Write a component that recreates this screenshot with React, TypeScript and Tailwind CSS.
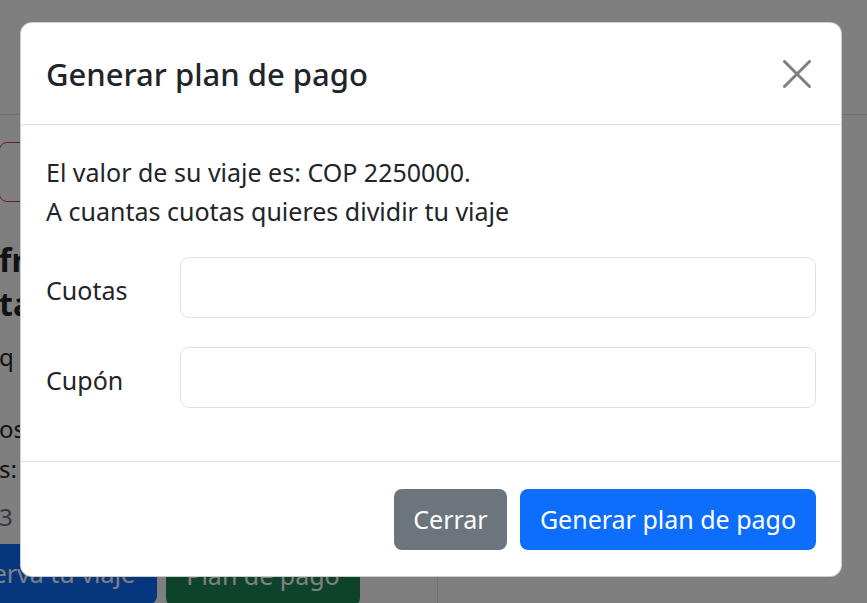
import React from "react";

export default function App() {
  return (
    <div className="relative h-[603px] w-[867px] overflow-hidden bg-white font-['Noto_Sans',sans-serif] text-[#212529]">
      {/* background page */}
      <div className="h-[115px] border-b border-[#dee2e6]" />
      <div className="flex">
        <div className="ml-[-1px] flex w-[438px] flex-col">
          <div className="mt-[27px] h-[60px] w-[300px] rounded-[8px] border border-[#dc3545]" />
          <div className="w-[21px] overflow-hidden whitespace-nowrap">
            <h2 className="mt-[36px] text-[32px] font-bold leading-[44px]">
              fr
              <br />
              ta
            </h2>
            <p className="mt-[12px] text-[24px] leading-[38px]">q</p>
            <p className="mt-[34px] text-[24px] leading-[38px]">os</p>
            <p className="mt-[2px] text-[24px] leading-[38px]">s:</p>
            <p className="mt-[10px] text-[24px] leading-[38px] text-[#6c757d]">3</p>
          </div>
          <div className="mt-[8px] flex gap-[9px]">
            <div className="ml-[-70px] flex h-[60px] w-[228px] items-center justify-center rounded-[8px] bg-[#0d6efd] text-[25px] text-white">
              Reserva tu viaje
            </div>
            <div className="mt-[2px] flex h-[60px] w-[194px] items-center justify-center rounded-[8px] bg-[#198754] text-[25px] text-white">
              Plan de pago
            </div>
          </div>
        </div>
        <div className="flex-1 border-l border-[#dee2e6]" />
      </div>

      {/* backdrop */}
      <div className="absolute inset-0 bg-black/50" />

      {/* modal */}
      <div className="absolute left-[20px] top-[22px] flex h-[555px] w-[822px] flex-col rounded-[12px] border border-black/20 bg-white">
        <div className="flex h-[102px] items-center justify-between border-b border-[#dee2e6] pl-[25px] pr-[25px]">
          <h5 className="text-[31px] font-medium leading-[38px] text-[#212529]">Generar plan de pago</h5>
          <button className="flex h-[38px] w-[38px] items-center justify-center">
            <svg width="28" height="28" viewBox="0 0 28 28">
              <path d="M1.5 1.5 L26.5 26.5 M26.5 1.5 L1.5 26.5" stroke="#7f7f7f" strokeWidth="3" strokeLinecap="round" />
            </svg>
          </button>
        </div>
        <div className="flex flex-1 flex-col border-b border-[#dee2e6] px-[25px] pt-[28px]">
          <p className="text-[25px] leading-[39px]">El valor de su viaje es: COP 2250000.</p>
          <p className="text-[25px] leading-[39px]">A cuantas cuotas quieres dividir tu viaje</p>
          <div className="mt-[26px] flex items-center">
            <label className="w-[134px] pt-[6px] text-[25px]">Cuotas</label>
            <input className="h-[61px] flex-1 rounded-[9px] border border-[#dee2e6] bg-white px-[20px] text-[25px] outline-none" />
          </div>
          <div className="mt-[29px] flex items-center">
            <label className="w-[134px] pt-[6px] text-[25px]">Cupón</label>
            <input className="h-[61px] flex-1 rounded-[9px] border border-[#dee2e6] bg-white px-[20px] text-[25px] outline-none" />
          </div>
        </div>
        <div className="flex h-[114px] items-center justify-end gap-[13px] px-[25px]">
          <button className="h-[61px] w-[113px] rounded-[8px] bg-[#6c757d] pt-[2px] text-[25px] text-white">Cerrar</button>
          <button className="h-[61px] w-[296px] rounded-[8px] bg-[#0d6efd] pt-[2px] text-[25px] text-white">Generar plan de pago</button>
        </div>
      </div>
    </div>
  );
}
